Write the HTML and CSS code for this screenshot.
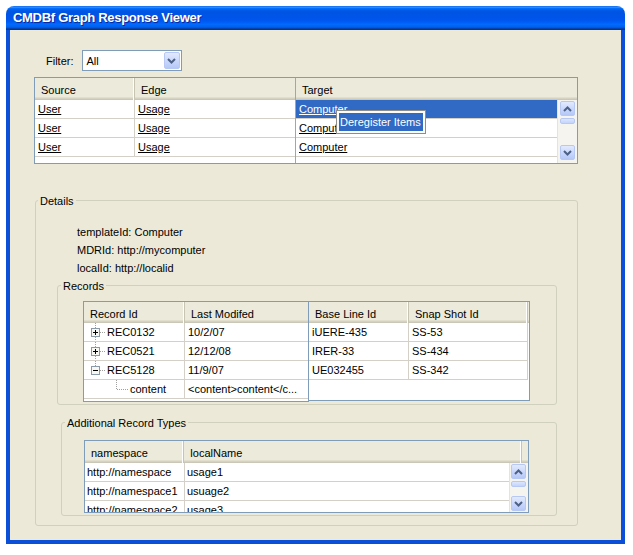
FILE: index.html
```html
<!DOCTYPE html>
<html lang="en">
<head>
<meta charset="utf-8">
<title>CMDBf Graph Response Viewer</title>
<link rel="stylesheet" href="styles.css">
</head>
<body>
<div class="window">
  <div class="titlebar">CMDBf Graph Response Viewer</div>
  <div class="frame">
    <div class="client">
      <div class="filter-row">
        <span class="filter-label">Filter:</span>
        <div class="combo">
          <span class="combo-value">All</span>
          <span class="combo-btn"><svg class="chev" width="9" height="6" viewBox="0 0 9 6"><path d="M1 1l3.5 3.5L8 1"/></svg></span>
        </div>
      </div>

      <div class="edge-table">
        <div class="pane-locked">
          <div class="thead thead-22">
            <div class="th col-source sep">Source</div>
            <div class="th grow">Edge</div>
          </div>
          <div class="row"><div class="td col-source sep"><span class="link">User</span></div><div class="td grow"><span class="link">Usage</span></div></div>
          <div class="row"><div class="td col-source sep"><span class="link">User</span></div><div class="td grow"><span class="link">Usage</span></div></div>
          <div class="row"><div class="td col-source sep"><span class="link">User</span></div><div class="td grow"><span class="link">Usage</span></div></div>
        </div>
        <div class="pane-main">
          <div class="thead thead-22">
            <div class="th grow">Target</div>
          </div>
          <div class="scroll-body">
            <div class="rows">
              <div class="row"><div class="td grow selected"><span class="link">Computer</span></div></div>
              <div class="row"><div class="td grow"><span class="link">Computer</span></div></div>
              <div class="row"><div class="td grow"><span class="link">Computer</span></div></div>
            </div>
            <div class="scrollbar sb-wide">
              <span class="sb-btn"><svg class="chev" width="9" height="6" viewBox="0 0 9 6"><path d="M1 5l3.5-3.5L8 5"/></svg></span>
              <span class="sb-thumb"></span>
              <span class="sb-btn sb-down"><svg class="chev" width="9" height="6" viewBox="0 0 9 6"><path d="M1 1l3.5 3.5L8 1"/></svg></span>
            </div>
          </div>
        </div>
        <div class="popup"><div class="popup-item">Deregister Items</div></div>
      </div>

      <fieldset class="group group-details">
        <legend>Details</legend>
        <div class="detail-lines">
          <div>templateId: Computer</div>
          <div>MDRId: http://mycomputer</div>
          <div>localId: http://localid</div>
        </div>

        <fieldset class="group group-records">
          <legend>Records</legend>
          <div class="records-table">
            <div class="tree-pane">
              <div class="thead">
                <div class="th col-rid sep">Record Id</div>
                <div class="th grow">Last Modifed</div>
              </div>
              <div class="row">
                <div class="td col-rid sep tree-cell">
                  <svg class="tree-gutter" width="23" height="18" viewBox="0 0 23 18"><path class="dot" d="M11.5 0v5M11.5 14v4M16 9.5h6"/><rect class="tbox" x="7.5" y="5.5" width="8" height="8"/><path class="tsign" d="M9 9.5h5M11.5 7v5"/></svg>
                  <span>REC0132</span>
                </div>
                <div class="td grow">10/2/07</div>
              </div>
              <div class="row">
                <div class="td col-rid sep tree-cell">
                  <svg class="tree-gutter" width="23" height="18" viewBox="0 0 23 18"><path class="dot" d="M11.5 0v5M11.5 14v4M16 9.5h6"/><rect class="tbox" x="7.5" y="5.5" width="8" height="8"/><path class="tsign" d="M9 9.5h5M11.5 7v5"/></svg>
                  <span>REC0521</span>
                </div>
                <div class="td grow">12/12/08</div>
              </div>
              <div class="row">
                <div class="td col-rid sep tree-cell">
                  <svg class="tree-gutter" width="23" height="18" viewBox="0 0 23 18"><path class="dot" d="M11.5 0v5M16 9.5h6"/><rect class="tbox" x="7.5" y="5.5" width="8" height="8"/><path class="tsign" d="M9 9.5h5"/></svg>
                  <span>REC5128</span>
                </div>
                <div class="td grow">11/9/07</div>
              </div>
              <div class="row">
                <div class="td col-rid sep tree-cell">
                  <svg class="tree-gutter" width="46" height="18" viewBox="0 0 46 18"><path class="dot" d="M32.5 0v9.5H44"/></svg>
                  <span>content</span>
                </div>
                <div class="td grow">&lt;content&gt;content&lt;/c...</div>
              </div>
            </div>
            <div class="data-pane">
              <div class="thead">
                <div class="th col-base sep">Base Line Id</div>
                <div class="th col-snap sep">Snap Shot Id</div>
              </div>
              <div class="row"><div class="td col-base sep">iUERE-435</div><div class="td col-snap sep">SS-53</div></div>
              <div class="row"><div class="td col-base sep">IRER-33</div><div class="td col-snap sep">SS-434</div></div>
              <div class="row"><div class="td col-base sep">UE032455</div><div class="td col-snap sep">SS-342</div></div>
            </div>
          </div>
        </fieldset>

        <fieldset class="group group-types">
          <legend>Additional Record Types</legend>
          <div class="types-table">
            <div class="thead thead-22">
              <div class="th col-ns sep">namespace</div>
              <div class="th col-local sep">localName</div>
              <div class="th grow"></div>
            </div>
            <div class="scroll-body">
              <div class="rows">
                <div class="row"><div class="td col-ns sep">http://namespace</div><div class="td grow">usage1</div></div>
                <div class="row"><div class="td col-ns sep">http://namespace1</div><div class="td grow">usuage2</div></div>
                <div class="row"><div class="td col-ns sep">http://namespace2</div><div class="td grow">usage3</div></div>
              </div>
              <div class="scrollbar sb-narrow">
                <span class="sb-btn"><svg class="chev" width="9" height="6" viewBox="0 0 9 6"><path d="M1 5l3.5-3.5L8 5"/></svg></span>
                <span class="sb-thumb"></span>
                <span class="sb-btn sb-down"><svg class="chev" width="9" height="6" viewBox="0 0 9 6"><path d="M1 1l3.5 3.5L8 1"/></svg></span>
              </div>
            </div>
          </div>
        </fieldset>
      </fieldset>
    </div>
  </div>
</div>
</body>
</html>
```

FILE: styles.css
```css
* { box-sizing: border-box; }

body {
  margin: 0;
  background: #ffffff;
  font-family: "Liberation Sans", Arial, sans-serif;
  font-size: 11px;
  color: #000000;
}

/* ---------- window chrome ---------- */
.window {
  margin: 6px 0 0 6px;
  width: 619px;
  height: 538px;
  display: flex;
  flex-direction: column;
  border-radius: 8px 8px 0 0;
  overflow: hidden;
}

.titlebar {
  flex: none;
  height: 24px;
  padding-left: 7px;
  line-height: 24px;
  color: #ffffff;
  font-size: 13px;
  font-weight: bold;
  letter-spacing: -0.3px;
  text-shadow: 1px 1px 0 #0a2a9c;
  white-space: nowrap;
  background: linear-gradient(to bottom,
    #0058ee 0%, #3593ff 4%, #288eff 6%, #127dff 8%, #036ffc 10%,
    #0262ee 14%, #0057e5 20%, #0054e3 24%, #0055eb 56%, #005bf5 66%,
    #026afe 76%, #0062ef 86%, #0052d6 92%, #0040ab 94%, #003092 100%);
}

.frame {
  flex: 1;
  display: flex;
  border: 4px solid #0b4fd8;
  border-top: 0;
}

.client {
  flex: 1;
  background: #ece9d8;
  padding-top: 20px;
}

/* ---------- filter ---------- */
.filter-row {
  display: flex;
  align-items: center;
  gap: 8px;
  height: 21px;
  padding-left: 36px;
}

.combo {
  width: 100px;
  height: 21px;
  border: 1px solid #7f9db9;
  background: #ffffff;
  padding: 1px;
  display: flex;
  align-items: center;
  justify-content: space-between;
}

.combo-value { padding-left: 3px; }

.combo-btn {
  width: 16px;
  height: 17px;
  border: 1px solid #b6c8f3;
  border-radius: 2px;
  background: linear-gradient(to bottom, #e2eafe, #c6d5fc 60%, #b5c8f6);
  display: flex;
  align-items: center;
  justify-content: center;
}

.chev path {
  fill: none;
  stroke: #4d6185;
  stroke-width: 2;
}

/* ---------- generic table parts ---------- */
.thead {
  display: flex;
  height: 21px;
  background: linear-gradient(to bottom,
    #ebeadb 0, #ebeadb calc(100% - 3px),
    #e2decd calc(100% - 3px), #e2decd calc(100% - 2px),
    #d6d2c2 calc(100% - 2px), #d6d2c2 calc(100% - 1px),
    #cbc7b8 calc(100% - 1px));
}

.thead-22 { height: 22px; }

.th {
  height: 100%;
  padding: 3px 0 0 6px;
  line-height: 18px;
  white-space: nowrap;
}

.thead-22 .th { line-height: 19px; }

.th.sep {
  border-right: 1px solid #c7c5b2;
  box-shadow: inset -1px 0 0 #ffffff;
}

.row {
  display: flex;
  height: 19px;
}

.td {
  height: 19px;
  padding-left: 3px;
  line-height: 18px;
  border-bottom: 1px solid #d4d0c8;
  white-space: nowrap;
  overflow: hidden;
}

.td.sep { border-right: 1px solid #d4d0c8; }

.grow { flex: 1; min-width: 0; }

.link { text-decoration: underline; }

.selected {
  background: #316ac5;
  color: #ffffff;
}

/* scrollbars */
.scroll-body {
  flex: 1;
  display: flex;
  min-height: 0;
}

.rows {
  flex: 1;
  min-width: 0;
  overflow: hidden;
}

.scrollbar {
  display: flex;
  flex-direction: column;
  background: #f5f4ef;
  border-left: 1px solid #e6e4da;
}

.sb-wide { width: 20px; padding: 1px 2px 3px 2px; }
.sb-narrow { width: 19px; padding: 1px 2px 1px 1px; }

.sb-btn {
  flex: none;
  width: 15px;
  height: 15px;
  border: 1px solid #b6c8f3;
  border-radius: 2px;
  background: linear-gradient(to bottom, #e2eafe, #c6d5fc 60%, #b5c8f6);
  display: flex;
  align-items: center;
  justify-content: center;
}

.sb-thumb {
  flex: none;
  width: 15px;
  height: 6px;
  margin-top: 2px;
  border: 1px solid #b6c8f3;
  border-radius: 2px;
  background: linear-gradient(to bottom, #dce6fe, #c3d3fb);
}

.sb-down { margin-top: auto; }

/* ---------- edge table ---------- */
.edge-table {
  position: relative;
  margin: 6px 0 0 24px;
  width: 544px;
  height: 87px;
  border: 1px solid #7f9db9;
  background: #ffffff;
  display: flex;
}

.pane-locked {
  width: 261px;
  border-right: 1px solid #9aa7b8;
}

.pane-main {
  flex: 1;
  display: flex;
  flex-direction: column;
}

.col-source { width: 100px; }

.popup {
  position: absolute;
  left: 301px;
  top: 32px;
  width: 90px;
  height: 24px;
  padding: 2px;
  background: #fbfbf9;
  border: 1px solid #8e8d87;
}

.popup-item {
  height: 18px;
  padding-left: 1px;
  line-height: 18px;
  background: #316ac5;
  color: #ffffff;
  white-space: nowrap;
}

/* ---------- group boxes ---------- */
.group {
  margin: 0;
  border: 1px solid #d0d0bf;
  border-radius: 3px;
  min-inline-size: 0;
}

.group legend {
  padding: 3px 2px 0;
  line-height: 13px;
  font-size: 11px;
}

.group-details {
  margin: 28px 0 0 25px;
  width: 543px;
  padding: 15px 0 9px 2px;
}

.detail-lines {
  margin-left: 39px;
  line-height: 18px;
}

.group-records {
  margin-left: 19px;
  width: 500px;
  padding: 8px 0 2px 3px;
}

.group-types {
  margin: 9px 0 0 23px;
  width: 496px;
  padding: 10px 0 2px 3px;
}

/* ---------- records table ---------- */
.records-table {
  margin-left: 22px;
  display: flex;
  align-items: flex-start;
}

.tree-pane {
  width: 226px;
  height: 101px;
  border: 1px solid #7f9db9;
  background: #ffffff;
}

.data-pane {
  width: 222px;
  height: 100px;
  margin-left: -1px;
  border: 1px solid #7f9db9;
  background: #ffffff;
}

.col-rid { width: 101px; }
.col-base { width: 100px; }
.col-snap { width: 119px; }

.tree-cell {
  display: flex;
  padding-left: 0;
}

.tree-gutter { flex: none; display: block; }

.tree-gutter .dot {
  fill: none;
  stroke: #a0a0a0;
  stroke-width: 1;
  stroke-dasharray: 1 1;
}

.tree-gutter .tbox {
  fill: #f7f7f4;
  stroke: #8a9aa8;
  stroke-width: 1;
}

.tree-gutter .tsign {
  fill: none;
  stroke: #000000;
  stroke-width: 1;
}

/* ---------- additional types table ---------- */
.types-table {
  margin-left: 19px;
  width: 445px;
  height: 73px;
  border: 1px solid #7f9db9;
  background: #ffffff;
  display: flex;
  flex-direction: column;
}

.col-ns { width: 100px; }
.col-local { width: 340px; }

.types-table .td { padding-left: 2px; }
```
